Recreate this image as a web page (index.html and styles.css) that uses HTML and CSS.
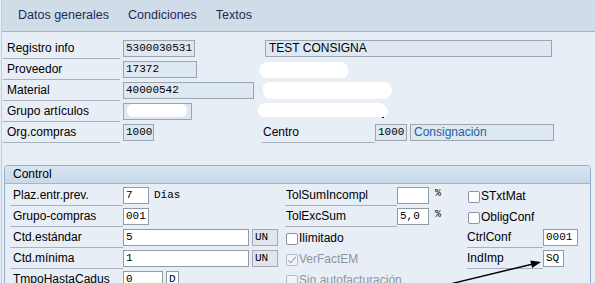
FILE: index.html
```html
<!DOCTYPE html>
<html lang="es">
<head>
  <meta charset="UTF-8">
  <title>Registro info</title>
  <link rel="stylesheet" href="styles.css">
</head>
<body>
  <div class="pantalla">
    <div class="pestanas">
      <span class="pestana">Datos generales</span>
      <span class="pestana">Condiciones</span>
      <span class="pestana">Textos</span>
    </div>

    <div class="cabecera">
      <div class="fila">
        <div class="celda">
          <span class="etiq">Registro info</span>
          <span class="campo lect w72">5300030531</span>
        </div>
        <div class="celda">
          <span class="campo lect texto w287">TEST CONSIGNA</span>
        </div>
      </div>
      <div class="fila">
        <div class="celda">
          <span class="etiq">Proveedor</span>
          <span class="campo lect w74">17372</span>
        </div>
        <div class="celda">
          <span class="borron b1"></span>
        </div>
      </div>
      <div class="fila">
        <div class="celda">
          <span class="etiq">Material</span>
          <span class="campo lect w131">40000542</span>
        </div>
        <div class="celda">
          <span class="borron b2"></span>
        </div>
      </div>
      <div class="fila">
        <div class="celda">
          <span class="etiq">Grupo artículos</span>
          <span class="campo lect w69"><span class="borron b-dentro"></span></span>
        </div>
        <div class="celda">
          <span class="borron b3"></span>
          <span class="punto"></span>
        </div>
      </div>
      <div class="fila">
        <div class="celda">
          <span class="etiq">Org.compras</span>
          <span class="campo lect w31">1000</span>
        </div>
        <div class="celda">
          <span class="etiq corta">Centro</span>
          <span class="campo lect w32 pegado">1000</span>
          <span class="campo lect texto azul w144">Consignación</span>
        </div>
      </div>
    </div>

    <div class="grupo">
      <div class="grupo-titulo">Control</div>
      <div class="grupo-cuerpo">
        <!-- fila 1 -->
        <div class="celda">
          <span class="etiq c1">Plaz.entr.prev.</span>
          <span class="campo w26">7</span>
          <span class="unidad">Días</span>
        </div>
        <div class="celda">
          <span class="etiq c2">TolSumIncompl</span>
          <span class="campo w32"></span>
          <span class="pct">%</span>
        </div>
        <div class="celda">
          <span class="check"></span><span class="chk-txt">STxtMat</span>
        </div>

        <!-- fila 2 -->
        <div class="celda">
          <span class="etiq c1">Grupo-compras</span>
          <span class="campo w26">001</span>
        </div>
        <div class="celda">
          <span class="etiq c2">TolExcSum</span>
          <span class="campo w32">5,0</span>
          <span class="pct">%</span>
        </div>
        <div class="celda">
          <span class="check"></span><span class="chk-txt">ObligConf</span>
        </div>

        <!-- fila 3 -->
        <div class="celda">
          <span class="etiq c1">Ctd.estándar</span>
          <span class="campo w126">5</span>
          <span class="campo gris w26">UN</span>
        </div>
        <div class="celda">
          <span class="check"></span><span class="chk-txt">Ilimitado</span>
        </div>
        <div class="celda">
          <span class="etiq c3">CtrlConf</span>
          <span class="campo w34">0001</span>
        </div>

        <!-- fila 4 -->
        <div class="celda">
          <span class="etiq c1">Ctd.mínima</span>
          <span class="campo w126">1</span>
          <span class="campo gris w26">UN</span>
        </div>
        <div class="celda">
          <span class="check off marcado"></span><span class="chk-txt off">VerFactEM</span>
        </div>
        <div class="celda">
          <span class="etiq c3">IndImp</span>
          <span class="campo w20">SQ</span>
        </div>

        <!-- fila 5 -->
        <div class="celda">
          <span class="etiq c1">TmpoHastaCadus</span>
          <span class="campo w40">0</span>
          <span class="campo w13 junto">D</span>
        </div>
        <div class="celda">
          <span class="check off"></span><span class="chk-txt off">Sin autofacturación</span>
        </div>
        <div class="celda"></div>
      </div>
    </div>
  </div>

  <svg class="flecha" width="595" height="283" viewBox="0 0 595 283">
    <line x1="450" y1="284" x2="533" y2="264" stroke="#000" stroke-width="1.4"/>
    <polygon points="541,262 532.1,267.9 530.3,260.6" fill="#000"/>
  </svg>
</body>
</html>
```

FILE: styles.css
```css
* {
  box-sizing: border-box;
}

body {
  margin: 0;
  width: 595px;
  height: 283px;
  overflow: hidden;
  position: relative;
  background: #e8eef6;
  font-family: "Liberation Sans", Arial, sans-serif;
  font-size: 12px;
  color: #000;
}

.pantalla {
  margin-left: 1px;
  height: 283px;
  border-left: 1px solid #c3ceda;
}

/* Pestañas */
.pestanas {
  height: 32px;
  display: flex;
  align-items: center;
  gap: 19px;
  padding-left: 16px;
  padding-bottom: 1px;
  background: #d0dce8;
  border-bottom: 1px solid #a4b4c4;
}

.pestana {
  font-size: 12.5px;
  color: #1c2b58;
}

/* Cabecera */
.cabecera {
  padding-top: 7px;
}

.fila {
  display: grid;
  grid-template-columns: 259px 1fr;
  height: 21px;
  padding-left: 1px;
}

.celda {
  display: flex;
  align-items: flex-start;
  height: 21px;
}

.etiq {
  width: 117px;
  height: 20px;
  line-height: 19px;
  padding-left: 4px;
  border-bottom: 1px solid #a8b0b9;
  white-space: nowrap;
  overflow: hidden;
}

.etiq.corta { width: 113px; padding-left: 1px; }
.etiq.c1 { width: 113px; padding-left: 3px; }
.etiq.c2 { width: 112px; padding-left: 1px; }
.etiq.c3 { width: 76px; padding-left: 0; }

.campo {
  margin-top: 1px;
  height: 17px;
  margin-left: 3px;
  padding-left: 2px;
  line-height: 15px;
  font-family: "Liberation Mono", "DejaVu Sans Mono", monospace;
  font-size: 11px;
  background: #fff;
  border: 1px solid #8f9ba6;
  white-space: nowrap;
  overflow: hidden;
}

.etiq + .campo.pegado,
.grupo-cuerpo .etiq + .campo {
  margin-left: 0;
}

.campo.lect {
  background: #dde8f2;
  border-color: #9ba6b1;
}

.campo.gris {
  background: #dfe6ed;
  border-color: #a3acb5;
}

.campo.texto {
  padding-left: 3px;
  font-family: "Liberation Sans", Arial, sans-serif;
  font-size: 12px;
}

.campo.azul {
  color: #1b5fa6;
}

.campo.junto { margin-left: 3px; padding-left: 2px; }

.w13 { width: 13px; }
.w20 { width: 21px; }
.w26 { width: 26px; }
.w31 { width: 31px; }
.w32 { width: 32px; }
.w34 { width: 35px; }
.w40 { width: 40px; }
.w69 { width: 69px; }
.w72 { width: 72px; }
.w74 { width: 74px; }
.w126 { width: 126px; }
.w131 { width: 131px; }
.w144 { width: 144px; }
.w287 { width: 287px; }

/* Zonas tachadas */
.borron {
  display: block;
  background: #fff;
  border-radius: 9px;
  filter: blur(0.4px);
}

.b1 { width: 89px; height: 16px; margin: 2px 0 0 -3px; border-radius: 10px 8px 6px 9px; }
.b2 { width: 129px; height: 17px; margin: 1px 0 0 1px; border-radius: 6px 9px 9px 8px; }
.b3 { width: 130px; height: 14px; margin: 1px 0 0 -4px; border-radius: 7px 10px 5px 6px; }
.b-dentro { width: 60px; height: 13px; margin: 0 0 0 1px; border-radius: 6px; }

.punto {
  width: 2px;
  height: 3px;
  margin: 13px 0 0 -6px;
  background: #000;
}

/* Grupo Control */
.grupo {
  margin: 21px 0 0 2px;
  width: 587px;
  height: 140px;
  border: 1px solid #93afcd;
  border-radius: 4px 4px 0 0;
}

.grupo-titulo {
  height: 18px;
  line-height: 17px;
  padding-left: 8px;
  background: linear-gradient(#d8e5f2, #c8d9ea);
  border-bottom: 1px solid #9db7d2;
  border-radius: 3px 3px 0 0;
}

.grupo-cuerpo {
  display: grid;
  grid-template-columns: 275px 182px 1fr;
  grid-auto-rows: 21px;
  padding: 2px 0 0 5px;
}

.unidad {
  margin: 3px 0 0 5px;
  font-family: "Liberation Mono", "DejaVu Sans Mono", monospace;
  font-size: 11px;
}

.pct {
  margin: 2px 0 0 6px;
  font-family: "Liberation Mono", "DejaVu Sans Mono", monospace;
  font-size: 10px;
}

.check {
  width: 12px;
  height: 12px;
  margin: 5px 0 0 1px;
  background: #fff;
  border: 1px solid #8c96a1;
  border-radius: 2px;
  position: relative;
}

.check.off {
  background: #f1f4f7;
  border-color: #b3bcc6;
}

.check.marcado::after {
  content: "";
  position: absolute;
  left: 3px;
  top: 0;
  width: 3px;
  height: 7px;
  border: solid #98a2ac;
  border-width: 0 1.5px 1.5px 0;
  transform: rotate(40deg);
}

.chk-txt {
  margin-top: 3px;
  padding-left: 1px;
  white-space: nowrap;
}

.chk-txt.off {
  color: #8d96a0;
}

/* Anotación */
.flecha {
  position: absolute;
  top: 0;
  left: 0;
  pointer-events: none;
}
```
